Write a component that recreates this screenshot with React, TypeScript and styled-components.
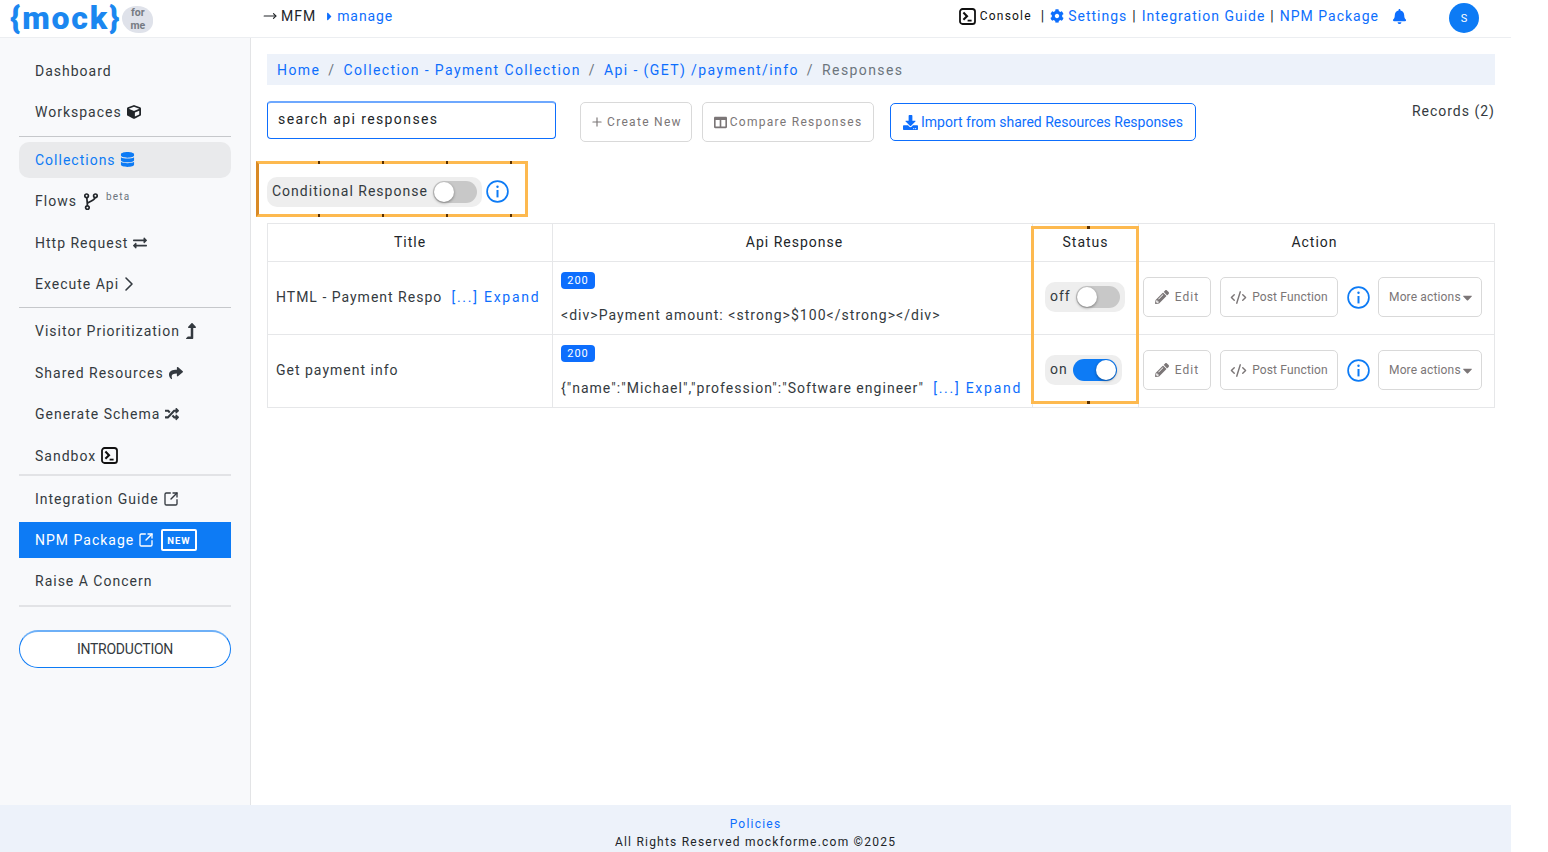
import * as React from 'react';
import styled, { createGlobalStyle } from 'styled-components';
import {
  FaBell,
  FaCaretDown,
  FaCaretRight,
  FaCog,
  FaColumns,
  FaCube,
  FaDatabase,
  FaDownload,
  FaExchangeAlt,
  FaLevelUpAlt,
  FaPencilAlt,
  FaRandom,
  FaShare,
} from 'react-icons/fa';
import { ChevronRight, CodeXml, MoveRight, Plus, SquareArrowOutUpRight } from 'lucide-react';

const GlobalStyle = createGlobalStyle`
  html, body {
    margin: 0;
    padding: 0;
    background: #fff;
    overflow: hidden;
  }

  body {
    font-family: Roboto, "Liberation Sans", sans-serif;
    font-size: 14px;
    letter-spacing: 1px;
    color: #212529;
  }

  * {
    box-sizing: border-box;
  }
`;

const Page = styled.div`
  display: flex;
  flex-direction: column;
  width: 1511px;
  height: 852px;
`;

const Header = styled.header`
  display: flex;
  align-items: flex-start;
  flex: 0 0 38px;
  border-bottom: 1px solid #eceef1;
`;

const Logo = styled.div`
  display: flex;
  align-items: flex-start;
  width: 263px;
  padding: 0 0 0 10px;
`;

const LogoText = styled.span`
  font-family: Roboto, sans-serif;
  font-size: 32px;
  font-weight: 900;
  line-height: 37px;
  letter-spacing: 1.8px;
  color: #1b87f0;
`;

const LogoBlob = styled.span`
  display: flex;
  flex-direction: column;
  align-items: center;
  justify-content: center;
  width: 31px;
  height: 27px;
  margin: 6px 0 0 1px;
  border-radius: 50% 55% 45% 60%;
  background: #dfe2ea;
  font-family: Roboto, sans-serif;
  font-size: 10.5px;
  font-weight: 700;
  line-height: 12.5px;
  letter-spacing: 0;
  color: #757a82;
`;

const HeaderLeft = styled.div`
  display: flex;
  align-items: center;
  height: 32px;
  gap: 4px;
  color: #212529;
`;

const HeaderLink = styled.a`
  color: #0d6efd;
  text-decoration: none;
`;

const Manage = styled(HeaderLink)`
  display: inline-flex;
  align-items: center;
  gap: 1px;
  margin-left: 3px;
  letter-spacing: 0.9px;
`;

const HeaderRight = styled.div`
  display: flex;
  align-items: center;
  height: 32px;
  margin-left: auto;
  padding-right: 32px;
`;

const ConsoleLabel = styled.span`
  margin-left: 4px;
  font-size: 12px;
  letter-spacing: 1.2px;
  color: #111;
`;

const Sep = styled.span`
  margin: 0 5px;
  color: #212529;
`;

const ConsoleSep = styled(Sep)`
  margin: 0 5px 0 9px;
`;

const BellWrap = styled.span`
  display: inline-flex;
  margin: 0 42px 0 13px;
  color: #0d6efd;
`;

const Avatar = styled.span`
  display: flex;
  align-items: center;
  justify-content: center;
  width: 30px;
  height: 30px;
  margin-top: 4px;
  border-radius: 50%;
  background: #0d7bf5;
  color: #fff;
  font-size: 11px;
  letter-spacing: 0;
`;

const Body = styled.div`
  display: flex;
  flex: 1 1 auto;
  min-height: 0;
`;

const Sidebar = styled.nav`
  flex: 0 0 251px;
  padding: 15px 19px 0;
  border-right: 1px solid #e3e4e6;
  background: #f8f9fb;
`;

const NavItem = styled.a<{ $state?: 'selected' | 'primary' }>`
  display: flex;
  align-items: center;
  gap: 5px;
  height: 36px;
  margin-bottom: 5.4px;
  padding-left: 16px;
  border-radius: ${p => (p.$state === 'selected' ? '10px' : '0')};
  background: ${p => (p.$state === 'selected' ? '#e9eaec' : p.$state === 'primary' ? '#0d7bf5' : 'transparent')};
  color: ${p => (p.$state === 'selected' ? '#0d7bf5' : p.$state === 'primary' ? '#fff' : '#343a40')};
  text-decoration: none;
`;

const NavRule = styled.hr`
  height: 0;
  margin: 0 0 5px;
  border: 0;
  border-top: 1px solid #c6c8cb;
`;

const LightRule = styled(NavRule)`
  margin: 0 0 5px;
  border-top: 2px solid #e2e3e6;
`;

const TightRule = styled(LightRule)`
  margin-top: -5.4px;
`;

const ChevronIcon = styled(ChevronRight)`
  margin-left: -7px;
`;

const LinkOutIcon = styled(SquareArrowOutUpRight)`
  margin-left: -1px;
`;

const VisitorIcon = styled(FaLevelUpAlt)`
  margin-left: -2px;
`;

const CollectionsIcon = styled(FaDatabase)`
  margin-left: -1px;
`;

const Beta = styled.sup`
  align-self: flex-start;
  margin: 7px 0 0 3px;
  font-size: 10px;
  line-height: 14px;
  letter-spacing: 1.2px;
  color: #6c757d;
`;

const NewTag = styled.span`
  margin-left: 2px;
  padding: 3px 4px 2px;
  border: 2px solid #fff;
  border-radius: 2px;
  font-size: 9.5px;
  font-weight: 700;
  line-height: 13px;
`;

const IntroButton = styled.button`
  display: block;
  width: 100%;
  height: 38px;
  margin-top: 23.2px;
  border: 1px solid #0d7bf5;
  border-top-width: 2px;
  border-top-color: #6eb0f7;
  border-radius: 20px;
  background: #fff;
  color: #343a40;
  font: 14px Roboto, sans-serif;
  letter-spacing: -0.25px;
`;

const Main = styled.main`
  flex: 1 1 auto;
  min-width: 0;
  padding: 16px 16px 0;
`;

const Breadcrumb = styled.div`
  display: flex;
  align-items: center;
  gap: 8px;
  height: 31px;
  padding-left: 10px;
  background: #edf2fa;
  color: #6c757d;
  letter-spacing: 1.4px;
`;

const CrumbLink = styled.a`
  color: #0d6efd;
  text-decoration: none;
`;

const Toolbar = styled.div`
  display: flex;
  align-items: flex-start;
  height: 75px;
  padding-top: 17px;
`;

const Search = styled.input`
  width: 289px;
  height: 38px;
  margin-top: -1px;
  padding: 0 10px 4px;
  border: 1px solid #0d6efd;
  border-top: 2px solid #6ea8fe;
  border-radius: 4px;
  outline: none;
  font: 14px Roboto, sans-serif;
  letter-spacing: 1.4px;
  color: #212529;

  &::placeholder {
    color: #212529;
    opacity: 1;
  }
`;

const GhostButton = styled.button<{ $wide: number }>`
  display: inline-flex;
  align-items: center;
  justify-content: center;
  gap: 3px;
  height: 40px;
  padding: 0;
  width: ${p => p.$wide}px;
  border: 1px solid #d9d9d9;
  border-radius: 5px;
  background: #fff;
  color: #7b7677;
  font: 12px Roboto, sans-serif;
  letter-spacing: 1.3px;
`;

const ImportButton = styled.button`
  display: inline-flex;
  align-items: center;
  justify-content: center;
  gap: 3px;
  width: 306px;
  height: 38px;
  margin: 1px 0 0 16px;
  padding: 0;
  border: 1px solid #0d6efd;
  border-radius: 5px;
  background: #fff;
  color: #0d6efd;
  font: 14px Roboto, sans-serif;
  letter-spacing: 0;
`;

const CreateButton = styled(GhostButton)`
  margin-left: 24px;
`;

const CompareButton = styled(GhostButton)`
  margin-left: 10px;
`;

const Records = styled.span`
  margin-left: auto;
  padding-top: 1px;
  color: #343a40;
`;

const ConditionalRow = styled.div`
  position: relative;
  display: flex;
  align-items: flex-start;
  gap: 4px;
  height: 63px;
  padding-top: 17px;

  > svg {
    margin-top: 3px;
  }
`;

const SwitchPill = styled.div`
  display: inline-flex;
  align-items: center;
  gap: 5px;
  height: 30px;
  padding: 0 5px;
  border-radius: 10px;
  background: #eeeeee;
  color: #343a40;
`;

const PillLabel = styled.span`
  padding-bottom: 3px;
`;

const Track = styled.span<{ $on: boolean }>`
  position: relative;
  display: inline-block;
  width: 44px;
  height: 22px;
  border-radius: 11px;
  background: ${p => (p.$on ? '#0d7bf5' : '#c8c8c8')};
`;

const Thumb = styled.span<{ $on: boolean }>`
  position: absolute;
  top: 1px;
  left: ${p => (p.$on ? '23px' : '1px')};
  width: 20px;
  height: 20px;
  border-radius: 50%;
  background: #fff;
  box-shadow: 0 1px 3px rgba(0, 0, 0, 0.4);
`;

const Highlight = styled.div`
  position: absolute;
  border: 3px solid #fdb94f;
  pointer-events: none;

  &::before,
  &::after {
    content: '';
    position: absolute;
    left: -3px;
    right: -3px;
    height: 3px;
    background: repeating-linear-gradient(90deg, transparent 0 62px, #5a3000 62px 64px);
  }

  &::before {
    top: -3px;
  }

  &::after {
    bottom: -3px;
  }
`;

const ConditionalHighlight = styled(Highlight)`
  top: 1px;
  left: -11px;
  width: 272px;
  height: 56px;
  border-left-color: #d98a26;
`;

const TableWrap = styled.div`
  position: relative;
`;

const StatusHighlight = styled(Highlight)`
  top: 3px;
  left: 764px;
  width: 108px;
  height: 178px;

  &::before,
  &::after {
    background: linear-gradient(90deg, transparent 56px, #5a3000 56px 59px, transparent 59px);
  }
`;

const Table = styled.table`
  width: 1227px;
  table-layout: fixed;
  border-collapse: collapse;
`;

const Th = styled.th<{ $w: number }>`
  width: ${p => p.$w}px;
  height: 38px;
  padding: 0 0 2px;
  border: 1px solid #e6e7e9;
  font-weight: 400;
  text-align: center;
  color: #212529;
`;

const ApiTh = styled(Th)`
  padding-left: 4px;
`;

const ActionTh = styled(Th)`
  padding-right: 4px;
`;

const Td = styled.td`
  height: 73px;
  padding: 0 8px 2px;
  border: 1px solid #e6e7e9;
  color: #343a40;
`;

const Expand = styled.a`
  margin-left: 4px;
  color: #0d6efd;
  letter-spacing: 1.75px;
  text-decoration: none;
`;

const Badge = styled.span`
  display: block;
  width: 34px;
  height: 17px;
  margin-bottom: 18px;
  border-radius: 4px;
  background: #0d6efd;
  color: #fff;
  font-size: 11px;
  line-height: 17px;
  text-align: center;
`;

const ResponseText = styled.div`
  letter-spacing: 1.03px;
  white-space: nowrap;
`;

const StatusCell = styled(Td)`
  padding: 0 0 2px 12px;
`;

const ActionCell = styled(Td)`
  padding: 0 4px 2px;
`;

const Actions = styled.div`
  display: flex;
  align-items: center;
`;

const ActionButton = styled.button<{ $w: number }>`
  display: inline-flex;
  align-items: center;
  justify-content: center;
  gap: 5px;
  width: ${p => p.$w}px;
  height: 40px;
  margin-right: 9px;
  padding: 0;
  border: 1px solid #d9d9d9;
  border-radius: 5px;
  background: #fff;
  color: #7b7677;
  font: 12px Roboto, sans-serif;
  letter-spacing: 0.15px;
`;

const EditButton = styled(ActionButton)`
  gap: 6px;
  letter-spacing: 1px;
`;

const MoreButton = styled(ActionButton)`
  justify-content: flex-start;
  gap: 0;
  margin: 0 0 0 8px;
  padding-left: 10px;
`;

const CaretIcon = styled(FaCaretDown)`
  margin-left: -1px;
`;

const Footer = styled.footer`
  flex: 0 0 47px;
  padding-top: 10px;
  background: #edf2fa;
  font-size: 12px;
  letter-spacing: 1.22px;
  line-height: 18px;
  text-align: center;
`;

const FooterLink = styled.a`
  display: block;
  color: #0d6efd;
  text-decoration: none;
`;

const FlowSvg = styled.svg`
  margin-left: 2px;
`;

// fork glyph: lucide's git-fork is thinner than the one in the sidebar
const FlowIcon = () => (
  <FlowSvg width="14" height="17" viewBox="0 0 14 17" fill="none" stroke="#212529" strokeWidth="1.7">
    <circle cx="2.6" cy="2.8" r="1.8" />
    <circle cx="11.4" cy="2.8" r="1.8" />
    <circle cx="3.4" cy="14.6" r="1.8" />
    <path d="M2.8 4.6c.2 2.6.5 5 .6 8.2M11 4.6c-.6 3-4.6 3.4-7.4 5.6" />
  </FlowSvg>
);

const TerminalIcon = () => (
  <svg width="17" height="17" viewBox="0 0 17 17" fill="none" stroke="#111" strokeWidth="1.8">
    <rect x="1" y="1" width="15" height="15" rx="2.6" />
    <path d="M4.4 4.6 8 8.2l-3.6 3.6" strokeWidth="2.1" />
    <path d="M8.6 12.6h4" strokeWidth="1.8" />
  </svg>
);

const InfoIcon = () => (
  <svg width="23" height="23" viewBox="0 0 23 23" fill="none" stroke="#0d7bf5" strokeWidth="1.7">
    <circle cx="11.5" cy="11.5" r="10.4" />
    <circle cx="11.5" cy="6.8" r="1.2" fill="#0d7bf5" stroke="none" />
    <path d="M11.5 10v7.4" strokeWidth="2" />
  </svg>
);

const Toggle: React.FC<{ on: boolean }> = ({ on }) => (
  <Track $on={on}>
    <Thumb $on={on} />
  </Track>
);

const rows = [
  {
    title: 'HTML - Payment Respo',
    titleMore: true,
    body: '<div>Payment amount: <strong>$100</strong></div>',
    bodyMore: false,
    on: false,
  },
  {
    title: 'Get payment info',
    titleMore: false,
    body: '{"name":"Michael","profession":"Software engineer"',
    bodyMore: true,
    on: true,
  },
];

export default function App() {
  return (
    <Page>
      <GlobalStyle />
      <Header>
        <Logo>
          <LogoText>{'{mock}'}</LogoText>
          <LogoBlob>
            <span>for</span>
            <span>me</span>
          </LogoBlob>
        </Logo>
        <HeaderLeft>
          <MoveRight size={14} color="#212529" />
          <span>MFM</span>
          <Manage>
            <FaCaretRight size={13} />
            manage
          </Manage>
        </HeaderLeft>
        <HeaderRight>
          <TerminalIcon />
          <ConsoleLabel>Console</ConsoleLabel>
          <ConsoleSep>|</ConsoleSep>
          <FaCog size={14} color="#0d6efd" style={{ marginRight: 4 }} />
          <HeaderLink>Settings</HeaderLink>
          <Sep>|</Sep>
          <HeaderLink>Integration Guide</HeaderLink>
          <Sep>|</Sep>
          <HeaderLink>NPM Package</HeaderLink>
          <BellWrap>
            <FaBell size={15} />
          </BellWrap>
          <Avatar>S</Avatar>
        </HeaderRight>
      </Header>
      <Body>
        <Sidebar>
          <NavItem>Dashboard</NavItem>
          <NavItem>
            Workspaces <FaCube size={14} color="#212529" />
          </NavItem>
          <NavRule />
          <NavItem $state="selected">
            Collections <CollectionsIcon size={15} />
          </NavItem>
          <NavItem>
            Flows <FlowIcon />
            <Beta>beta</Beta>
          </NavItem>
          <NavItem>
            Http Request <FaExchangeAlt size={14} />
          </NavItem>
          <NavItem>
            Execute Api <ChevronIcon size={24} strokeWidth={1.6} />
          </NavItem>
          <NavRule />
          <NavItem>
            Visitor Prioritization <VisitorIcon size={16} />
          </NavItem>
          <NavItem>
            Shared Resources <FaShare size={14} />
          </NavItem>
          <NavItem>
            Generate Schema <FaRandom size={14} />
          </NavItem>
          <NavItem>
            Sandbox <TerminalIcon />
          </NavItem>
          <TightRule />
          <NavItem>
            Integration Guide <LinkOutIcon size={16} strokeWidth={2} />
          </NavItem>
          <NavItem $state="primary">
            NPM Package <LinkOutIcon size={16} strokeWidth={2} />
            <NewTag>NEW</NewTag>
          </NavItem>
          <NavItem>Raise A Concern</NavItem>
          <LightRule />
          <IntroButton>INTRODUCTION</IntroButton>
        </Sidebar>
        <Main>
          <Breadcrumb>
            <CrumbLink>Home</CrumbLink>/<CrumbLink>Collection - Payment Collection</CrumbLink>/
            <CrumbLink>Api - (GET) /payment/info</CrumbLink>/<span>Responses</span>
          </Breadcrumb>
          <Toolbar>
            <Search placeholder="search api responses" />
            <CreateButton $wide={112}>
              <Plus size={14} /> Create New
            </CreateButton>
            <CompareButton $wide={172}>
              <FaColumns size={13} /> Compare Responses
            </CompareButton>
            <ImportButton>
              <FaDownload size={15} /> Import from shared Resources Responses
            </ImportButton>
            <Records>Records (2)</Records>
          </Toolbar>
          <ConditionalRow>
            <SwitchPill>
              <PillLabel>Conditional Response</PillLabel>
              <Toggle on={false} />
            </SwitchPill>
            <InfoIcon />
            <ConditionalHighlight />
          </ConditionalRow>
          <TableWrap>
            <Table>
              <thead>
                <tr>
                  <Th $w={285}>Title</Th>
                  <ApiTh $w={480}>Api Response</ApiTh>
                  <Th $w={106}>Status</Th>
                  <ActionTh $w={356}>Action</ActionTh>
                </tr>
              </thead>
              <tbody>
                {rows.map(row => (
                  <tr key={row.title}>
                    <Td>
                      {row.title}
                      {row.titleMore ? <Expand> [...] Expand</Expand> : null}
                    </Td>
                    <Td>
                      <Badge>200</Badge>
                      <ResponseText>
                        {row.body}
                        {row.bodyMore ? <Expand> [...] Expand</Expand> : null}
                      </ResponseText>
                    </Td>
                    <StatusCell>
                      <SwitchPill>
                        <PillLabel>{row.on ? 'on' : 'off'}</PillLabel>
                        <Toggle on={row.on} />
                      </SwitchPill>
                    </StatusCell>
                    <ActionCell>
                      <Actions>
                        <EditButton $w={68}>
                          <FaPencilAlt size={14} /> Edit
                        </EditButton>
                        <ActionButton $w={118}>
                          <CodeXml size={17} /> Post Function
                        </ActionButton>
                        <InfoIcon />
                        <MoreButton $w={104}>
                          More actions <CaretIcon size={15} />
                        </MoreButton>
                      </Actions>
                    </ActionCell>
                  </tr>
                ))}
              </tbody>
            </Table>
            <StatusHighlight />
          </TableWrap>
        </Main>
      </Body>
      <Footer>
        <FooterLink>Policies</FooterLink>
        All Rights Reserved mockforme.com ©2025
      </Footer>
    </Page>
  );
}
